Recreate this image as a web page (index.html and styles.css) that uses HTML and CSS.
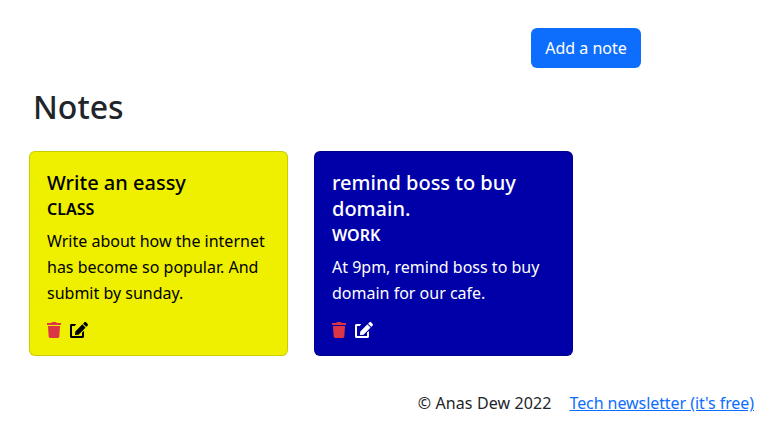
FILE: index.html
```html
<!DOCTYPE html>
<html lang="en">
<head>
    <meta charset="UTF-8">
    <meta name="viewport" content="width=device-width, initial-scale=1.0">
    <title>Notes</title>
    <link rel="stylesheet" href="styles.css">
</head>
<body>
    <div class="top-bar">
        <button class="add-button">Add a note</button>
    </div>

    <h1 class="page-title">Notes</h1>

    <div class="notes">
        <div class="note note-yellow">
            <h2 class="note-title">Write an eassy</h2>
            <h3 class="note-tag">CLASS</h3>
            <p class="note-text">Write about how the internet has become so popular. And submit by sunday.</p>
            <div class="note-icons">
                <svg class="icon-trash" viewBox="0 0 448 512"><path d="M432 32H312l-9.4-18.7A24 24 0 0 0 281.1 0H166.8a23.72 23.72 0 0 0-21.4 13.3L136 32H16A16 16 0 0 0 0 48v32a16 16 0 0 0 16 16h416a16 16 0 0 0 16-16V48a16 16 0 0 0-16-16zM53.2 467a48 48 0 0 0 47.9 45h245.8a48 48 0 0 0 47.9-45L416 128H32z"/></svg>
                <svg class="icon-edit" viewBox="0 0 576 512"><path d="M402.6 83.2l90.2 90.2c3.8 3.8 3.8 10 0 13.8L274.4 405.6l-92.8 10.3c-12.4 1.4-22.9-9.1-21.5-21.5l10.3-92.8L388.8 83.2c3.8-3.8 10-3.8 13.8 0zm162-22.9l-48.8-48.8c-15.2-15.2-39.9-15.2-55.2 0l-35.4 35.4c-3.8 3.8-3.8 10 0 13.8l90.2 90.2c3.8 3.8 10 3.8 13.8 0l35.4-35.4c15.2-15.3 15.2-40 0-55.2zM384 346.2V448H64V128h73.9c3.2 0 6.2-1.3 8.5-3.5l40-40c7.6-7.6 2.2-20.5-8.5-20.5H48C21.5 64 0 85.5 0 112v352c0 26.5 21.5 48 48 48h352c26.5 0 48-21.5 48-48V306.2c0-10.7-12.9-16-20.5-8.5l-40 40c-2.2 2.3-3.5 5.3-3.5 8.5z"/></svg>
            </div>
        </div>
        <div class="note note-blue">
            <h2 class="note-title">remind boss to buy domain.</h2>
            <h3 class="note-tag">WORK</h3>
            <p class="note-text">At 9pm, remind boss to buy domain for our cafe.</p>
            <div class="note-icons">
                <svg class="icon-trash" viewBox="0 0 448 512"><path d="M432 32H312l-9.4-18.7A24 24 0 0 0 281.1 0H166.8a23.72 23.72 0 0 0-21.4 13.3L136 32H16A16 16 0 0 0 0 48v32a16 16 0 0 0 16 16h416a16 16 0 0 0 16-16V48a16 16 0 0 0-16-16zM53.2 467a48 48 0 0 0 47.9 45h245.8a48 48 0 0 0 47.9-45L416 128H32z"/></svg>
                <svg class="icon-edit" viewBox="0 0 576 512"><path d="M402.6 83.2l90.2 90.2c3.8 3.8 3.8 10 0 13.8L274.4 405.6l-92.8 10.3c-12.4 1.4-22.9-9.1-21.5-21.5l10.3-92.8L388.8 83.2c3.8-3.8 10-3.8 13.8 0zm162-22.9l-48.8-48.8c-15.2-15.2-39.9-15.2-55.2 0l-35.4 35.4c-3.8 3.8-3.8 10 0 13.8l90.2 90.2c3.8 3.8 10 3.8 13.8 0l35.4-35.4c15.2-15.3 15.2-40 0-55.2zM384 346.2V448H64V128h73.9c3.2 0 6.2-1.3 8.5-3.5l40-40c7.6-7.6 2.2-20.5-8.5-20.5H48C21.5 64 0 85.5 0 112v352c0 26.5 21.5 48 48 48h352c26.5 0 48-21.5 48-48V306.2c0-10.7-12.9-16-20.5-8.5l-40 40c-2.2 2.3-3.5 5.3-3.5 8.5z"/></svg>
            </div>
        </div>
    </div>

    <div class="footer">
        <span class="copyright">© Anas Dew 2022</span>
        <a class="newsletter" href="#">Tech newsletter (it's free)</a>
    </div>
</body>
</html>
```

FILE: styles.css
```css
/* page */
body {
    font-family: "Noto Sans", sans-serif;
    font-size: 16px;
    color: #212529;
    background-color: #fff;
    margin: 0;
}

.top-bar {
    display: flex;
    justify-content: flex-end;
    padding: 28px 118px 0 0;
}

.add-button {
    width: 110px;
    height: 40px;
    font-family: inherit;
    font-size: 16px;
    color: #fff;
    background-color: #0d6efd;
    border: none;
    border-radius: 6px;
}

.page-title {
    font-size: 32px;
    font-weight: 500;
    line-height: 38px;
    margin: 20px 0 25px 33px;
}

/* note cards */
.notes {
    display: flex;
    gap: 26px;
    padding-left: 29px;
}

.note {
    box-sizing: border-box;
    width: 259px;
    height: 205px;
    padding: 18px 17px 0;
    border: 1px solid rgba(0, 0, 0, 0.15);
    border-radius: 6px;
}

.note-yellow {
    background-color: #eef000;
    color: #000;
}

.note-blue {
    background-color: #0000a8;
    color: #fff;
}

.note-title {
    font-size: 20px;
    font-weight: 500;
    line-height: 26px;
    margin: 0;
}

.note-tag {
    font-size: 16px;
    font-weight: 600;
    line-height: 24px;
    margin: 1px 0 7px;
}

.note-text {
    line-height: 26px;
    margin: 0 0 16px;
}

.note-icons {
    display: flex;
    gap: 9px;
}

.icon-trash, .icon-edit {
    height: 16px;
}

.icon-trash {
    width: 14px;
    fill: #dc3545;
}

.icon-edit {
    width: 18px;
    fill: currentColor;
}

/* footer */
.footer {
    display: flex;
    justify-content: flex-end;
    gap: 18px;
    margin-top: 36px;
    padding-right: 5px;
    line-height: 22px;
}

.copyright {
    letter-spacing: 0.1px;
}

.newsletter {
    color: #0d6efd;
    letter-spacing: -0.07px;
}
```
